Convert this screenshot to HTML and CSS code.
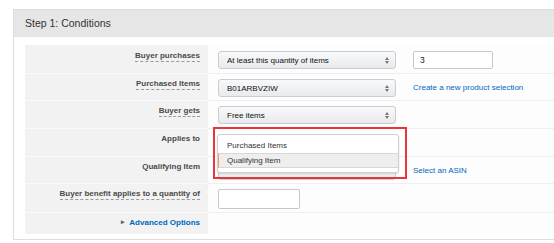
FILE: index.html
```html
<!DOCTYPE html>
<html>
<head>
<meta charset="utf-8">
<link rel="stylesheet" href="styles.css">
</head>
<body>
<div class="panel">
  <div class="panel-head">Step 1: Conditions</div>
  <div class="panel-body">
    <div class="form">
      <div class="row h28 first">
        <div class="label"><span class="tip">Buyer purchases</span></div>
        <div class="value">
          <div class="select"><span>At least this quantity of items</span><svg class="arr" width="4" height="7" viewBox="0 0 4 7"><path d="M0 3 L2 0 L4 3 Z M0 4 L2 7 L4 4 Z" fill="#777"/></svg></div>
          <div class="input">3</div>
        </div>
      </div>
      <div class="row h27">
        <div class="label"><span class="tip">Purchased Items</span></div>
        <div class="value">
          <div class="select"><span>B01ARBVZIW</span><svg class="arr" width="4" height="7" viewBox="0 0 4 7"><path d="M0 3 L2 0 L4 3 Z M0 4 L2 7 L4 4 Z" fill="#777"/></svg></div>
          <a class="link">Create a new product selection</a>
        </div>
      </div>
      <div class="row h28">
        <div class="label"><span class="tip">Buyer gets</span></div>
        <div class="value">
          <div class="select"><span>Free items</span><svg class="arr" width="4" height="7" viewBox="0 0 4 7"><path d="M0 3 L2 0 L4 3 Z M0 4 L2 7 L4 4 Z" fill="#777"/></svg></div>
        </div>
      </div>
      <div class="row h28">
        <div class="label"><span>Applies to</span></div>
        <div class="value anchor">
          <div class="select blank"></div>
          <div class="highlight-box"></div>
          <div class="listbox">
            <div class="opt">Purchased Items</div>
            <div class="opt sel">Qualifying Item</div>
          </div>
        </div>
      </div>
      <div class="row h27">
        <div class="label"><span>Qualifying Item</span></div>
        <div class="value">
          <div class="select blank"></div>
          <a class="link">Select an ASIN</a>
        </div>
      </div>
      <div class="row h29">
        <div class="label"><span class="tip">Buyer benefit applies to a quantity of</span></div>
        <div class="value">
          <div class="input small"></div>
        </div>
      </div>
      <div class="row h22">
        <div class="label"><span class="adv"><span class="tri">&#9656;</span>Advanced Options</span></div>
        <div class="value"></div>
      </div>
    </div>
  </div>
</div>
</body>
</html>
```

FILE: styles.css
```css
html, body {
  margin: 0;
  padding: 0;
  background: #ffffff;
  overflow: hidden;
}
body {
  font-family: "Liberation Sans", Arial, sans-serif;
  color: #333;
}
.panel {
  margin: 9px 0 0 13px;
  width: 540px;
  border: 1px solid #dddddd;
  background: #ffffff;
}
.panel-head {
  height: 27px;
  background: #e6e6e6;
  font-size: 10.5px;
  line-height: 27px;
  padding-left: 11px;
  color: #333;
}
.panel-body {
  padding: 8px 0 5px 11px;
}
.form {
  display: flex;
  flex-direction: column;
}
.row {
  display: grid;
  grid-template-columns: 183px 1fr;
  box-sizing: border-box;
}
.h28 { height: 28px; }
.h27 { height: 27px; }
.h29 { height: 29px; }
.h22 { height: 22px; }
.row .label {
  background: #f2f2f2;
  border-top: 1px solid #f9f9f9;
  text-align: right;
  padding: 4px 8px 0 0;
  font-size: 8px;
  font-weight: bold;
  line-height: 12px;
  color: #4a4a4a;
}
.row .value {
  background: #fdfdfd;
  border-top: 1px solid #efefef;
  display: flex;
  align-items: flex-start;
  gap: 17px;
  padding: 5px 0 0 10px;
}
.row.first .label, .row.first .value {
  border-top-color: transparent;
}
.tip {
  border-bottom: 1px dashed #999;
  padding-bottom: 1px;
}
.select {
  box-sizing: border-box;
  width: 178px;
  height: 18px;
  flex: none;
  border: 1px solid #c9ccd0;
  border-radius: 3px;
  background: linear-gradient(#f8f9fa, #e8eaed);
  display: flex;
  align-items: center;
  justify-content: space-between;
  padding: 0 6px 0 8px;
  font-size: 8px;
  color: #111;
}
.arr { display: block; }
.input {
  box-sizing: border-box;
  width: 80px;
  height: 18px;
  border: 1px solid #c8c8c8;
  border-radius: 2px;
  background: #fff;
  font-size: 8.5px;
  line-height: 16px;
  padding-left: 6px;
  color: #111;
}
.input.small {
  width: 82px;
  height: 20px;
}
.link {
  color: #0066c0;
  font-size: 8px;
  line-height: 18px;
  text-decoration: none;
}
.adv {
  color: #0066c0;
}
.tri {
  color: #666;
  font-size: 7px;
  margin-right: 4px;
  position: relative;
  top: -1px;
}
.anchor {
  position: relative;
}
.highlight-box {
  position: absolute;
  left: 5px;
  top: -2px;
  width: 194px;
  height: 52px;
  box-sizing: border-box;
  border: 2px solid #e8343a;
}
.listbox {
  position: absolute;
  left: 9px;
  top: 5px;
  width: 182px;
  height: 39px;
  box-sizing: border-box;
  background: #fff;
  border: 1px solid #d0d0d0;
  border-radius: 3px;
  box-shadow: 0 1px 2px rgba(0,0,0,0.12);
  padding-top: 4px;
  font-size: 8px;
  color: #333;
}
.opt {
  height: 14px;
  line-height: 14px;
  padding-left: 9px;
}
.opt.sel {
  height: 15px;
  line-height: 14px;
  background: #eeeeee;
  border-top: 1px solid #d6d6d6;
  border-bottom: 1px solid #d6d6d6;
  border-left: 1px solid #f0a050;
  box-sizing: border-box;
  padding-left: 8px;
}
```
